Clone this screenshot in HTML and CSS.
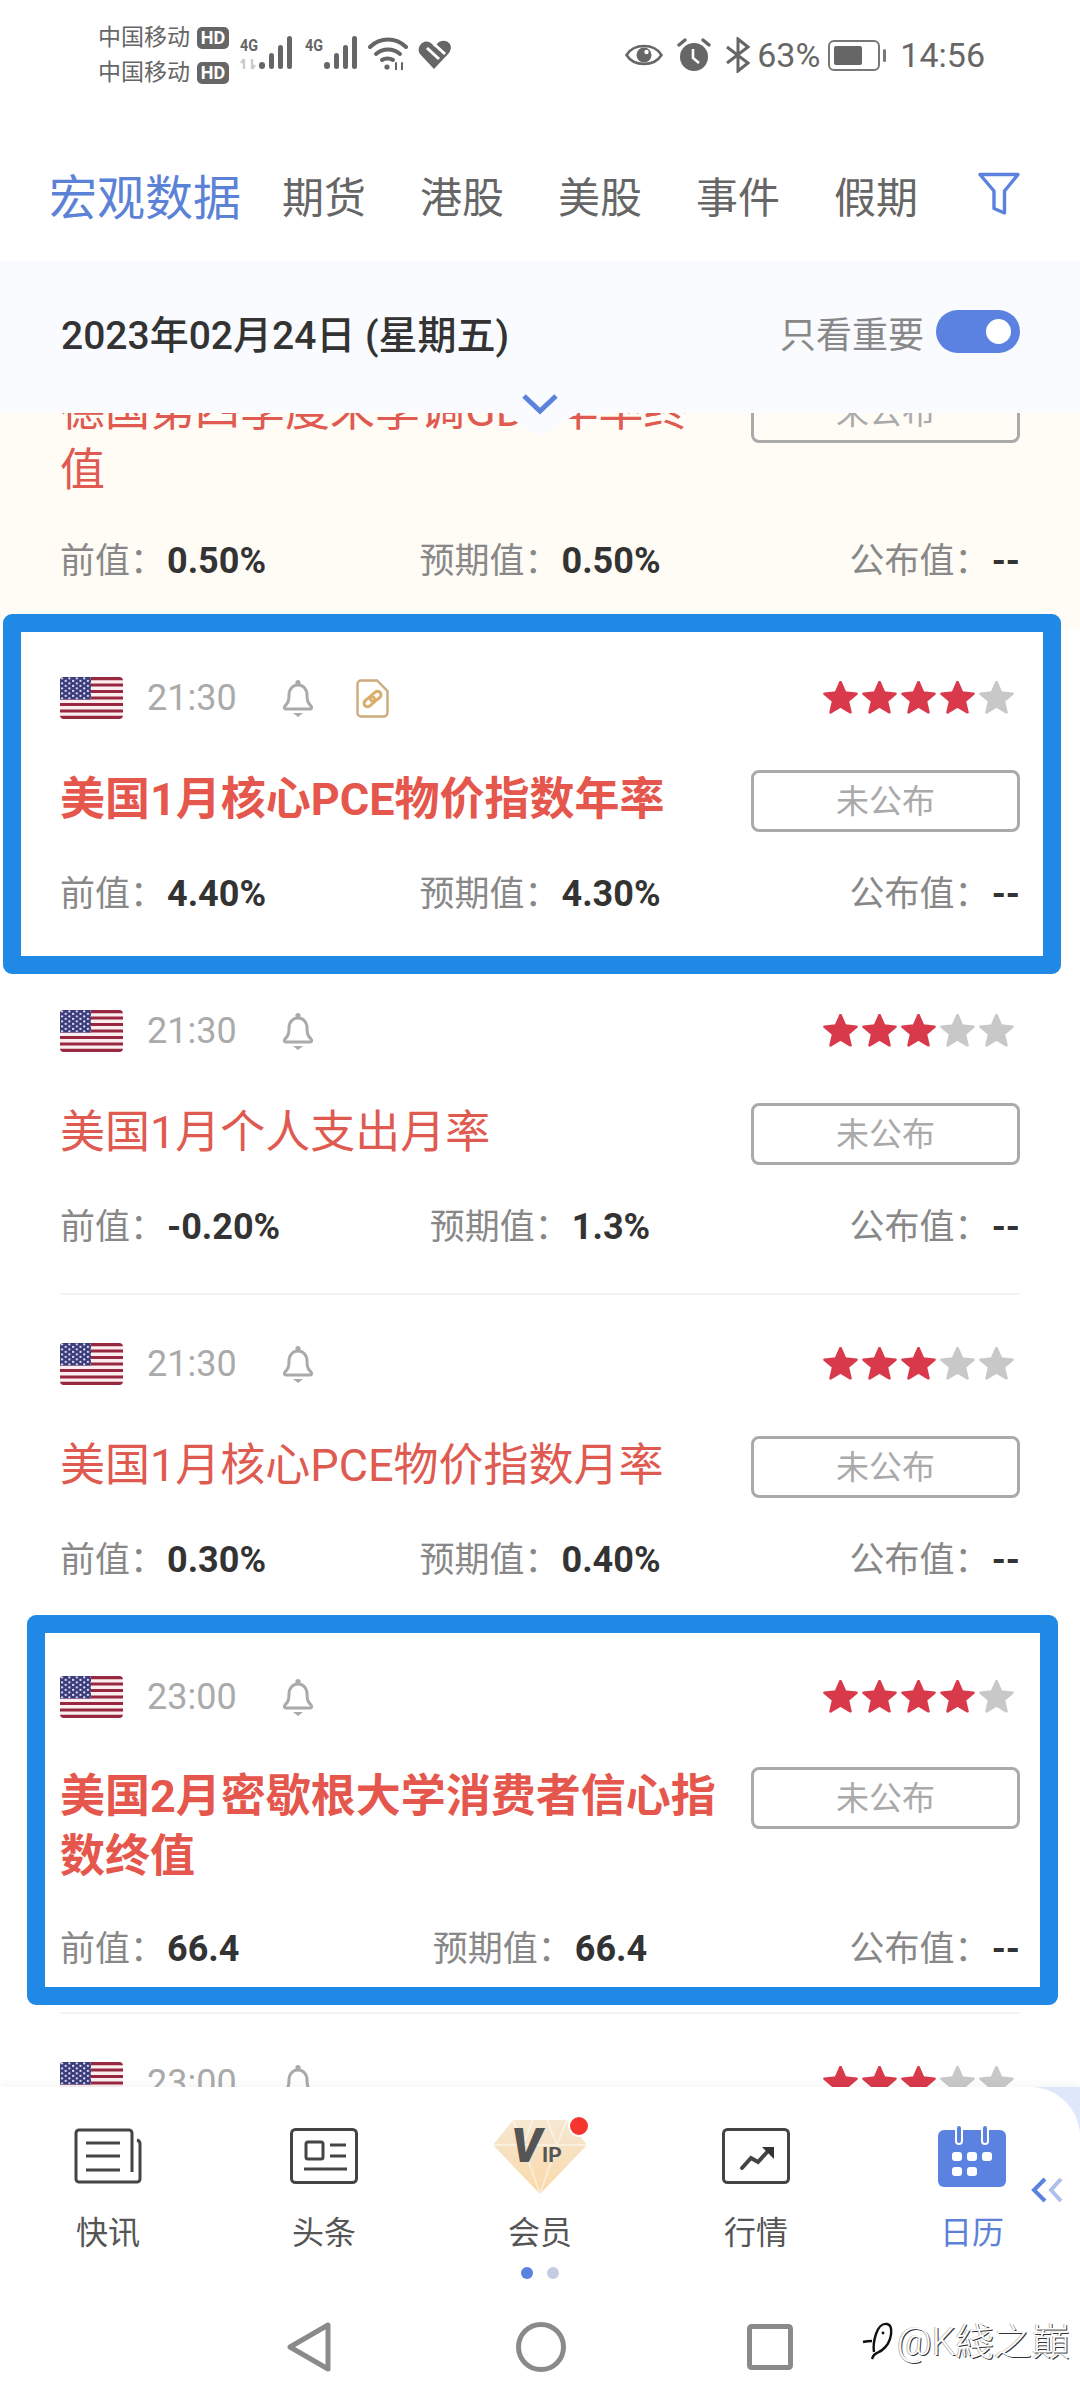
FILE: index.html
```html
<!DOCTYPE html>
<html lang="zh-CN">
<head>
  <meta charset="UTF-8" />
  <meta name="viewport" content="width=device-width, initial-scale=1.0"/>
  <title>日历</title>
  <link rel="stylesheet" href="styles.css">
</head>
<body>

<svg class="defs" width="0" height="0">
  <defs>
    <pattern id="dots" width="7.4" height="5" patternUnits="userSpaceOnUse">
      <circle cx="2" cy="1.4" r="1.1" fill="#e8e8f4"/>
      <circle cx="5.7" cy="3.9" r="1.1" fill="#e8e8f4"/>
    </pattern>
    <clipPath id="flag-clip"><rect width="63" height="42" rx="4"/></clipPath>
    <symbol id="flag" viewBox="0 0 63 42">
      <g clip-path="url(#flag-clip)">
        <rect width="63" height="42" fill="#fbeef0"/>
        <path d="M0 1.6H63M0 8H63M0 14.5H63M0 21H63M0 27.5H63M0 34H63M0 40.4H63" stroke="#97283f" stroke-width="3.2"/>
        <rect width="31" height="22.5" fill="#3b3c7c"/>
        <rect width="31" height="22.5" fill="url(#dots)"/>
      </g>
    </symbol>
    <symbol id="bell" viewBox="0 0 34 39">
      <circle cx="17" cy="3.5" r="2.6" fill="#aaa"/>
      <path d="M4 27c3-3 4-5 4-11 0-6 4-10 9-10s9 4 9 10c0 6 1 8 4 11 1 1 1 3-1 3H5c-2 0-2-2-1-3z" fill="none" stroke="#aaa" stroke-width="3"/>
      <path d="M12 34h10l-5 4z" fill="#aaa"/>
    </symbol>
    <symbol id="doc" viewBox="0 0 33 39">
      <path d="M5 1.5H21L31.5 12V33.5a4 4 0 0 1-4 4H5a3.5 3.5 0 0 1-3.5-3.5V5A3.5 3.5 0 0 1 5 1.5z" fill="#fff" stroke="#cdab7c" stroke-width="2.4"/>
      <g transform="rotate(-40 16.5 20)" fill="none" stroke="#d8b06c" stroke-width="3">
        <rect x="6.5" y="16.5" width="12" height="7" rx="3.5"/>
        <rect x="14.5" y="16.5" width="12" height="7" rx="3.5"/>
      </g>
    </symbol>
    <symbol id="star" viewBox="1 2 32 32">
      <path d="M17 3l4.2 9.6 10.4 1-7.9 6.8 2.4 10.2L17 25.2 7.9 30.6l2.4-10.2-7.9-6.8 10.4-1z" stroke-linejoin="round" stroke-width="2.4"/>
    </symbol>
    <symbol id="signal" viewBox="0 0 34 34">
      <g fill="#666">
        <rect x="0" y="26" width="6" height="7" rx="3"/>
        <rect x="10" y="17" width="5" height="16" rx="2.5"/>
        <rect x="19" y="9" width="5" height="24" rx="2.5"/>
        <rect x="28" y="0" width="5" height="33" rx="2.5"/>
      </g>
    </symbol>
    <linearGradient id="gem" x1="0" y1="0" x2="0" y2="1">
      <stop offset="0" stop-color="#f5e7d2"/>
      <stop offset="1" stop-color="#fad9a8"/>
    </linearGradient>
  </defs>
</svg>

<div class="screen">

  <!-- status bar -->
  <div class="status">
    <div class="carriers">
      <div class="carrier">中国移动<span class="hd">HD</span></div>
      <div class="carrier">中国移动<span class="hd">HD</span></div>
    </div>
    <svg class="ic-net" width="53" height="34" viewBox="0 0 53 34">
      <text x="0" y="15" class="net-text" textLength="18" lengthAdjust="spacingAndGlyphs">4G</text>
      <path d="M4 23v10M4 23l-3 4M12 33V23M12 33l3-4" stroke="#ccc" stroke-width="2.4" fill="none"/>
      <use href="#signal" x="19" y="0" width="34" height="34"/>
    </svg>
    <svg class="ic-net2" width="53" height="34" viewBox="0 0 53 34">
      <text x="0" y="15" class="net-text" textLength="18" lengthAdjust="spacingAndGlyphs">4G</text>
      <use href="#signal" x="19" y="0" width="34" height="34"/>
    </svg>
    <svg class="ic-wifi" width="40" height="34" viewBox="0 0 40 34" fill="none" stroke="#666" stroke-width="4" stroke-linecap="round">
      <path d="M2 11c10-10 26-10 36 0"/>
      <path d="M8 18c7-6 17-6 24 0"/>
      <path d="M14 24c3-2 8-2 11 0"/>
      <circle cx="19" cy="31" r="2.6" fill="#666" stroke="none"/>
      <path d="M28 27v7M34 27v7" stroke-width="2"/>
    </svg>
    <svg class="ic-heart" width="33" height="30" viewBox="0 0 33 30">
      <path d="M16 29L2 14C-1 10 1 4 6 2c3-1 6 0 8 2l3 3 2-3c3-4 9-4 12-1 3 3 2 7 0 10z" fill="#666"/>
      <path d="M9 8l12 11M16 4l11 10" stroke="#fff" stroke-width="3" fill="none"/>
    </svg>

    <div class="status-right">
      <svg width="38" height="28" viewBox="0 0 38 28" fill="none">
        <path d="M1.5 14C9 2 29 2 36.5 14 29 26 9 26 1.5 14z" stroke="#666" stroke-width="2.6"/>
        <circle cx="19" cy="14" r="7.5" fill="#666"/>
        <circle cx="21.5" cy="11" r="2.2" fill="#fff"/>
      </svg>
      <svg width="34" height="34" viewBox="0 0 34 34">
        <circle cx="17" cy="19" r="14" fill="#666"/>
        <path d="M16 11v9l6 5" stroke="#fff" stroke-width="2.6" fill="none"/>
        <path d="M2 7l6-5M32 7l-6-5" stroke="#666" stroke-width="3.4" stroke-linecap="round"/>
      </svg>
      <svg width="26" height="36" viewBox="0 0 26 36" fill="none" stroke="#666" stroke-width="3">
        <path d="M2 10l21 16-10 8V2l10 8L2 26"/>
      </svg>
      <span class="pct">63%</span>
      <div class="battery"><i class="battery-fill"></i></div>
      <i class="battery-tip"></i>
      <span class="clock">14:56</span>
    </div>
  </div>

  <!-- tabs -->
  <div class="tabs">
    <span class="tab active">宏观数据</span>
    <span class="tab">期货</span>
    <span class="tab">港股</span>
    <span class="tab">美股</span>
    <span class="tab">事件</span>
    <span class="tab">假期</span>
    <svg class="filter" width="42" height="43" viewBox="0 0 42 43" fill="#fff" stroke="#5b82dc" stroke-width="3.4" stroke-linejoin="round">
      <path d="M2 2.5H40L26.5 19V41L16 36.5V19z"/>
    </svg>
  </div>

  <!-- date -->
  <div class="datebar">
    <div class="date">2023年02月24日 (星期五)</div>
    <div class="only">
      <span>只看重要</span>
      <div class="switch"><i class="knob"></i></div>
    </div>
  </div>

  <!-- events -->
  <div class="list">
    <div class="list-in">

      <div class="row cream">
        <div class="row-in">
          <div class="top"></div>
          <div class="mid">
            <div class="title">德国第四季度未季调GDP年率终值</div>
            <div class="state">未公布</div>
          </div>
          <div class="metrics">
            <div class="m">前值：<b>0.50%</b></div>
            <div class="m">预期值：<b>0.50%</b></div>
            <div class="m end">公布值：<b>--</b></div>
          </div>
        </div>
      </div>

      <div class="row">
        <div class="row-in">
          <div class="top">
            <svg class="flag"><use href="#flag"/></svg>
            <span class="time">21:30</span>
            <svg class="bell"><use href="#bell"/></svg>
            <svg class="doc"><use href="#doc"/></svg>
            <div class="stars">
              <svg class="on"><use href="#star"/></svg><svg class="on"><use href="#star"/></svg><svg class="on"><use href="#star"/></svg><svg class="on"><use href="#star"/></svg><svg><use href="#star"/></svg>
            </div>
          </div>
          <div class="mid">
            <div class="title strong">美国1月核心PCE物价指数年率</div>
            <div class="state">未公布</div>
          </div>
          <div class="metrics">
            <div class="m">前值：<b>4.40%</b></div>
            <div class="m">预期值：<b>4.30%</b></div>
            <div class="m end">公布值：<b>--</b></div>
          </div>
        </div>
      </div>

      <div class="row">
        <div class="row-in">
          <div class="top">
            <svg class="flag"><use href="#flag"/></svg>
            <span class="time">21:30</span>
            <svg class="bell"><use href="#bell"/></svg>
            <div class="stars">
              <svg class="on"><use href="#star"/></svg><svg class="on"><use href="#star"/></svg><svg class="on"><use href="#star"/></svg><svg><use href="#star"/></svg><svg><use href="#star"/></svg>
            </div>
          </div>
          <div class="mid">
            <div class="title">美国1月个人支出月率</div>
            <div class="state">未公布</div>
          </div>
          <div class="metrics">
            <div class="m">前值：<b>-0.20%</b></div>
            <div class="m">预期值：<b>1.3%</b></div>
            <div class="m end">公布值：<b>--</b></div>
          </div>
        </div>
      </div>

      <div class="row">
        <div class="row-in">
          <div class="top">
            <svg class="flag"><use href="#flag"/></svg>
            <span class="time">21:30</span>
            <svg class="bell"><use href="#bell"/></svg>
            <div class="stars">
              <svg class="on"><use href="#star"/></svg><svg class="on"><use href="#star"/></svg><svg class="on"><use href="#star"/></svg><svg><use href="#star"/></svg><svg><use href="#star"/></svg>
            </div>
          </div>
          <div class="mid">
            <div class="title">美国1月核心PCE物价指数月率</div>
            <div class="state">未公布</div>
          </div>
          <div class="metrics">
            <div class="m">前值：<b>0.30%</b></div>
            <div class="m">预期值：<b>0.40%</b></div>
            <div class="m end">公布值：<b>--</b></div>
          </div>
        </div>
      </div>

      <div class="row tall">
        <div class="row-in">
          <div class="top">
            <svg class="flag"><use href="#flag"/></svg>
            <span class="time">23:00</span>
            <svg class="bell"><use href="#bell"/></svg>
            <div class="stars">
              <svg class="on"><use href="#star"/></svg><svg class="on"><use href="#star"/></svg><svg class="on"><use href="#star"/></svg><svg class="on"><use href="#star"/></svg><svg><use href="#star"/></svg>
            </div>
          </div>
          <div class="mid">
            <div class="title strong">美国2月密歇根大学消费者信心指数终值</div>
            <div class="state">未公布</div>
          </div>
          <div class="metrics">
            <div class="m">前值：<b>66.4</b></div>
            <div class="m">预期值：<b>66.4</b></div>
            <div class="m end">公布值：<b>--</b></div>
          </div>
        </div>
      </div>

      <div class="row">
        <div class="row-in">
          <div class="top">
            <svg class="flag"><use href="#flag"/></svg>
            <span class="time">23:00</span>
            <svg class="bell"><use href="#bell"/></svg>
            <div class="stars">
              <svg class="on"><use href="#star"/></svg><svg class="on"><use href="#star"/></svg><svg class="on"><use href="#star"/></svg><svg><use href="#star"/></svg><svg><use href="#star"/></svg>
            </div>
          </div>
        </div>
      </div>

    </div>
  </div>

  <!-- bottom nav -->
  <div class="bottom">
    <div class="tabbar">
      <div class="nav-item">
        <div class="nav-icon">
          <svg width="68" height="56" viewBox="0 0 68 56" fill="none" stroke="#444" stroke-width="3">
            <path d="M58 44V5a3 3 0 0 0-3-3H5a3 3 0 0 0-3 3v46a3 3 0 0 0 3 3h58a3 3 0 0 0 3-3V16a4 4 0 0 0-3-4"/>
            <path d="M12 15H46M12 28H46M12 42H46"/>
          </svg>
        </div>
        <span>快讯</span>
      </div>
      <div class="nav-item">
        <div class="nav-icon">
          <svg width="68" height="56" viewBox="0 0 68 56" fill="none" stroke="#444" stroke-width="3">
            <rect x="1.5" y="1.5" width="65" height="53" rx="4"/>
            <rect x="16" y="14" width="17" height="17" rx="2"/>
            <path d="M40 17H56M40 28H56M14 41H57"/>
          </svg>
        </div>
        <span>头条</span>
      </div>
      <div class="nav-item">
        <div class="nav-icon">
          <svg class="gem" width="94" height="75" viewBox="0 0 94 75">
            <path d="M20 1H74L94 26 47 75 0 26z" fill="url(#gem)"/>
            <path d="M20 1L30 26 47 75 64 26 74 1M0 26H94M30 26L40 1M64 26L54 1" stroke="#fff" stroke-opacity=".45" stroke-width="2" fill="none"/>
            <text x="18" y="43" class="gem-v">V</text>
            <text x="49" y="43" class="gem-ip">IP</text>
          </svg>
          <i class="badge"></i>
        </div>
        <span>会员</span>
      </div>
      <div class="nav-item">
        <div class="nav-icon">
          <svg width="68" height="56" viewBox="0 0 68 56" fill="none" stroke="#444" stroke-width="3">
            <rect x="1.5" y="1.5" width="65" height="53" rx="4"/>
            <path d="M20 40L29 30 36 34 47 22" stroke-width="4" stroke-linecap="round"/>
            <path d="M40 19H52V31z" fill="#333" stroke="none"/>
          </svg>
        </div>
        <span>行情</span>
      </div>
      <div class="nav-item current">
        <div class="nav-icon">
          <svg width="68" height="62" viewBox="0 0 68 62">
            <rect x="0" y="5" width="68" height="57" rx="6" fill="#5b82e0"/>
            <path d="M21 3V16M47 3V16" stroke="#fff" stroke-width="8" stroke-linecap="round"/>
            <path d="M21 3V16M47 3V16" stroke="#5b82e0" stroke-width="4" stroke-linecap="round"/>
            <g fill="#fff">
              <rect x="14" y="27" width="10" height="9" rx="3"/><rect x="29" y="27" width="10" height="9" rx="3"/><rect x="44" y="27" width="10" height="9" rx="3"/>
              <rect x="14" y="42" width="10" height="9" rx="3"/><rect x="29" y="42" width="10" height="9" rx="3"/>
            </g>
          </svg>
        </div>
        <span>日历</span>
      </div>
      <svg class="fold" width="32" height="26" viewBox="0 0 32 26" fill="none" stroke-width="4">
        <path d="M30 2L20 13l10 11" stroke="#aebfec"/>
        <path d="M14 2L3 13l11 11" stroke="#5b82e0"/>
      </svg>
    </div>

    <div class="dots"><i class="dot on"></i><i class="dot"></i></div>

    <div class="keys">
      <svg width="44" height="50" viewBox="0 0 44 50" fill="none" stroke="#8a8a8a" stroke-width="5" stroke-linejoin="round"><path d="M41 3V47L3 25z"/></svg>
      <svg width="50" height="50" viewBox="0 0 50 50" fill="none" stroke="#8a8a8a" stroke-width="5"><circle cx="25" cy="25" r="22.5"/></svg>
      <svg width="46" height="46" viewBox="0 0 46 46" fill="none" stroke="#8a8a8a" stroke-width="5" stroke-linejoin="round"><rect x="2.5" y="2.5" width="41" height="41" rx="2"/></svg>
    </div>
  </div>

  <!-- pointer tab under the date bar -->
  <svg class="pull" width="80" height="44" viewBox="0 0 80 44">
    <path d="M0 0H80V20L40 44 0 20z" fill="#f9fbff"/>
    <path d="M24 4L40 19 56 4" fill="none" stroke="#5b82dc" stroke-width="5"/>
  </svg>

  <!-- marker frames drawn over the screenshot -->
  <div class="frame frame-a"></div>
  <div class="frame frame-b"></div>

  <div class="mark">
    <svg width="34" height="42" viewBox="0 0 34 42" fill="none" stroke="#111" stroke-width="2.4">
      <path d="M3 24c4-1 7-1 9-1M14 34c-1-6 0-12 2-18 2-6 6-11 11-10 5 1 5 8 3 15-2 6-6 11-13 14-3 1-4 3-5 6"/>
      <circle cx="23" cy="15" r="1.4" fill="#111" stroke="none"/>
    </svg>
    <span>@K綫之巔</span>
  </div>
</div>

</body>
</html>
```

FILE: styles.css
```css
* {
  box-sizing: border-box;
}
html, body {
  margin: 0;
  padding: 0;
  background: #fff;
}
body {
  font-family: Roboto, "Noto Sans CJK SC", sans-serif;
  color: #333;
}
.defs {
  position: absolute;
}
.screen {
  position: relative;
  width: 1080px;
  height: 2400px;
  overflow: hidden;
  display: flex;
  flex-direction: column;
}

/* status bar */
.status {
  height: 105px;
  flex: none;
  padding: 26px 95px 0 98px;
  display: flex;
  align-items: flex-start;
  color: #666;
}
.carriers {
  display: flex;
  flex-direction: column;
  gap: 12px;
}
.carrier {
  display: flex;
  align-items: center;
  height: 23px;
  font-size: 23px;
  line-height: 23px;
  gap: 7px;
}
.hd {
  width: 32px;
  height: 22px;
  background: #666;
  color: #fff;
  border-radius: 5px;
  font-size: 18px;
  line-height: 22px;
  font-weight: 700;
  text-align: center;
}
.ic-net {
  margin: 10px 0 0 11px;
}
.ic-net2 {
  margin: 10px 0 0 12px;
}
.net-text {
  font-size: 17px;
  font-weight: 700;
  fill: #666;
}
.ic-wifi {
  margin: 10px 0 0 10px;
}
.ic-heart {
  margin: 14px 0 0 10px;
}
.status-right {
  margin-left: auto;
  display: flex;
  align-items: center;
  height: 58px;
  font-size: 34px;
  color: #666;
  gap: 14px;
}
.pct {
  margin-left: -8px;
}
.battery {
  width: 52px;
  height: 31px;
  border: 2.5px solid #777;
  border-radius: 6px;
  padding: 4px;
  margin-left: -6px;
}
.battery-fill {
  display: block;
  width: 28px;
  height: 100%;
  background: #666;
  border-radius: 2px;
}
.battery-tip {
  width: 3px;
  height: 13px;
  background: #777;
  border-radius: 2px;
  margin-left: -11px;
}

/* tabs */
.tabs {
  height: 156px;
  flex: none;
  display: flex;
  align-items: center;
  padding: 22px 60px 0 49px;
  gap: 54px;
  font-size: 42px;
  color: #666;
}
.tab.active {
  font-size: 48px;
  color: #5b82d6;
  margin-right: -13px;
}
.filter {
  margin-left: auto;
  margin-top: -1px;
}

/* date */
.datebar {
  height: 152px;
  flex: none;
  background: #f9fbff;
  padding: 0 60px 11px 61px;
  display: flex;
  align-items: center;
  justify-content: space-between;
  position: relative;
  z-index: 2;
}
.date {
  font-size: 39px;
  font-weight: 500;
  color: #333;
}
.only {
  display: flex;
  align-items: center;
  gap: 12px;
  font-size: 36px;
  color: #888;
}
.switch {
  width: 84px;
  height: 43px;
  border-radius: 22px;
  background: #5b82e0;
  position: relative;
}
.knob {
  position: absolute;
  top: 9px;
  right: 9px;
  width: 25px;
  height: 25px;
  border-radius: 50%;
  background: #fff;
}

/* events */
.list {
  flex: 1;
  overflow: hidden;
}
.list-in {
  margin-top: -173px;
}
.row {
  padding: 0 60px;
}
.row.cream {
  background: #fffbf5;
}
.row-in {
  padding: 48px 0 44px;
  border-bottom: 2px solid #f3f3f3;
}
.cream .row-in {
  padding-bottom: 46px;
  border-bottom: 0;
}
.top {
  height: 42px;
  display: flex;
  align-items: center;
}
.flag {
  width: 63px;
  height: 42px;
}
.time {
  font-size: 36px;
  color: #aaa;
  margin-left: 24px;
  width: 134px;
}
.bell {
  width: 34px;
  height: 39px;
}
.doc {
  width: 33px;
  height: 39px;
  margin-left: 41px;
}
.stars {
  margin-left: auto;
  margin-right: 6px;
  display: flex;
  gap: 4px;
}
.stars svg {
  width: 35px;
  height: 35px;
  fill: #c8c8c8;
  stroke: #c8c8c8;
}
.stars svg.on {
  fill: #d93a4b;
  stroke: #d93a4b;
}
.mid {
  margin-top: 51px;
  display: flex;
  justify-content: space-between;
  align-items: flex-start;
  min-height: 62px;
}
.title {
  width: 665px;
  font-size: 45px;
  line-height: 60px;
  color: #df5a50;
}
.title.strong {
  font-weight: 700;
  color: #e5564c;
}
.state {
  width: 269px;
  height: 62px;
  border: 3px solid #aaa;
  border-radius: 8px;
  font-size: 33px;
  line-height: 58px;
  text-align: center;
  color: #aaa;
}
.metrics {
  margin-top: 40px;
  display: grid;
  grid-template-columns: 1fr auto 1fr;
  height: 44px;
  align-items: center;
}
.cream .metrics {
  margin-top: 38px;
}
.m {
  font-size: 35px;
  line-height: 44px;
  color: #888;
  white-space: nowrap;
}
.m b {
  margin-left: 2px;
  font-size: 36px;
  color: #333;
  font-weight: 700;
}
.m.end {
  justify-self: end;
}
.tall .row-in {
  padding-bottom: 41px;
}
.tall .mid {
  margin-top: 49px;
}

/* bottom nav */
.bottom {
  height: 313px;
  flex: none;
  position: relative;
  z-index: 3;
  background: #fff;
  box-shadow: 0 -3px 10px rgba(0, 0, 0, 0.04);
}
.bottom::before {
  content: "";
  position: absolute;
  top: 0;
  right: 0;
  width: 60px;
  height: 60px;
  background: #dfe8fb;
}
.tabbar {
  position: relative;
  height: 170px;
  padding-top: 36px;
  display: flex;
  background: #fff;
  border-top-right-radius: 50px;
}
.nav-item {
  width: 216px;
  display: flex;
  flex-direction: column;
  align-items: center;
  font-size: 32px;
  line-height: 44px;
  color: #555;
}
.nav-item.current {
  color: #5b82d6;
}
.nav-icon {
  position: relative;
  height: 66px;
  margin-bottom: 22px;
  display: flex;
  align-items: center;
  justify-content: center;
}
.badge {
  position: absolute;
  top: -8px;
  right: -3px;
  width: 22px;
  height: 22px;
  border-radius: 50%;
  background: #f5352e;
  border: 2px solid #fff;
}
.gem-v {
  font-size: 48px;
  font-weight: 900;
  font-style: italic;
  fill: #555;
}
.gem-ip {
  font-size: 21px;
  font-weight: 700;
  fill: #555;
}
.fold {
  position: absolute;
  right: 17px;
  top: 90px;
}
.dots {
  display: flex;
  justify-content: center;
  gap: 14px;
  margin-top: 10px;
}
.dot {
  width: 12px;
  height: 12px;
  border-radius: 50%;
  background: #c5cbe0;
}
.dot.on {
  background: #5b82e0;
}
.keys {
  position: relative;
  margin-top: 43px;
  height: 50px;
  display: flex;
  align-items: center;
  padding-left: 287px;
}
.keys svg:nth-child(2) {
  margin-left: 185px;
}
.keys svg:nth-child(3) {
  margin-left: 181px;
}

/* overlays */
.pull {
  position: absolute;
  left: 500px;
  top: 392px;
  z-index: 2;
}
.frame {
  position: absolute;
  border: 18px solid #2089e5;
  border-radius: 9px;
  z-index: 4;
}
.frame-a {
  left: 3px;
  top: 614px;
  width: 1058px;
  height: 360px;
}
.frame-b {
  left: 27px;
  top: 1615px;
  width: 1031px;
  height: 390px;
}
.mark {
  position: absolute;
  left: 860px;
  top: 2311px;
  z-index: 5;
  display: flex;
  align-items: center;
  gap: 3px;
  font-family: Roboto, "Noto Sans CJK TC", sans-serif;
  font-weight: 300;
  font-size: 38px;
  color: #fff;
  text-shadow: 1px 1px 0 #333, -1px 0 0 #bbb;
  white-space: nowrap;
}
```
